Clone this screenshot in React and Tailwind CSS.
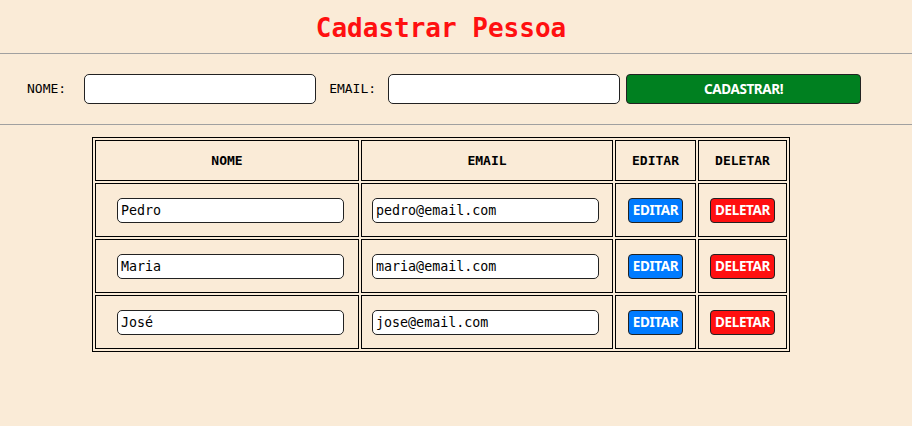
const pessoas = [
  { nome: "Pedro", email: "pedro@email.com" },
  { nome: "Maria", email: "maria@email.com" },
  { nome: "José", email: "jose@email.com" },
];

const inputCls =
  "h-[25px] w-[227px] rounded-[5px] border border-[#222] bg-white px-[3px] text-[13.33px] text-black outline-none font-['DejaVu_Sans_Mono',monospace]";

const btnCls =
  "h-[25px] rounded-[4px] border border-[#222] px-[4px] text-[13.5px] font-bold text-white font-['Noto_Sans',sans-serif] tracking-[-0.4px]";

export default function App() {
  return (
    <div className="min-h-[426px] w-full bg-[#faebd7] text-black font-['DejaVu_Sans_Mono',monospace]">
      <div className="flex h-[53px] w-[882px] items-center justify-center pt-[3px]">
        <h1 className="text-[26px] font-bold leading-none text-[#ff1010]">Cadastrar Pessoa</h1>
      </div>
      <hr className="border-t border-[#a0a0a0]" />

      <form className="flex h-[70px] items-center pl-[27px] text-[13px]">
        <label className="mr-[18px]">NOME:</label>
        <input className="h-[30px] w-[232px] rounded-[5px] border border-[#222] bg-white outline-none" />
        <label className="ml-[13px] mr-[12px]">EMAIL:</label>
        <input className="h-[30px] w-[232px] rounded-[5px] border border-[#222] bg-white outline-none" />
        <button
          type="button"
          className="ml-[6px] h-[30px] w-[235px] rounded-[4px] border border-[#222] bg-[#008020] text-[13.5px] font-bold text-white font-['Noto_Sans',sans-serif] tracking-[-0.4px]"
        >
          CADASTRAR!
        </button>
      </form>
      <hr className="border-t border-[#a0a0a0]" />

      <table className="ml-[92px] mt-[12px] border-separate border-spacing-[2px] border border-black">
        <thead>
          <tr>
            <th className="h-[41px] w-[264px] border border-black p-0 text-[13px] font-bold">NOME</th>
            <th className="w-[252px] border border-black p-0 text-[13px] font-bold">EMAIL</th>
            <th className="w-[81px] border border-black p-0 text-[13px] font-bold">EDITAR</th>
            <th className="w-[89px] border border-black p-0 text-[13px] font-bold">DELETAR</th>
          </tr>
        </thead>
        <tbody>
          {pessoas.map((p) => (
            <tr key={p.email}>
              <td className="h-[54px] border border-black p-0">
                <div className="flex pl-[21px]">
                  <input className={inputCls} defaultValue={p.nome} />
                </div>
              </td>
              <td className="border border-black p-0">
                <div className="flex pl-[10px]">
                  <input className={inputCls} defaultValue={p.email} />
                </div>
              </td>
              <td className="border border-black p-0 text-center">
                <button type="button" className={`${btnCls} bg-[#007bff]`}>
                  EDITAR
                </button>
              </td>
              <td className="border border-black p-0 text-center">
                <button type="button" className={`${btnCls} bg-[#ff1010]`}>
                  DELETAR
                </button>
              </td>
            </tr>
          ))}
        </tbody>
      </table>
    </div>
  );
}
